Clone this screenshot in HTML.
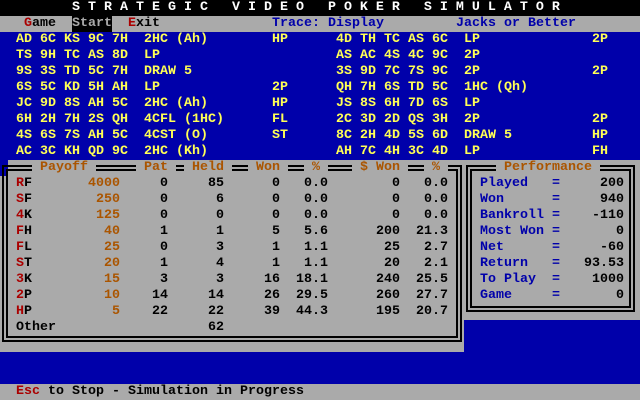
<!DOCTYPE html>
<html><head><meta charset="utf-8"><style>
*{margin:0;padding:0}
body{width:640px;height:400px;background:#0000aa;position:relative;overflow:hidden;font-family:"Liberation Mono","DejaVu Sans Mono",monospace;font-size:13.333px;line-height:16px;font-weight:bold}
div,span{position:absolute;white-space:pre}
span span{position:static}
.r{color:#aa0000}.br{color:#aa5500}.bl{color:#0000aa}.k{color:#000}.y{color:#ffff55}.w{color:#fff}
.g{background:#aaaaaa}
.row{left:0;width:640px;height:16px}
.box{border:6px double #000}
.n{text-align:right;color:#000}
</style></head><body>
<div class="row" style="top:0;background:#000"><span class="w" style="left:72px;top:0">S T R A T E G I C   V I D E O   P O K E R   S I M U L A T O R</span></div>
<div class="row g" style="top:16px"></div>
<span class="k" style="left:24px;top:16px"><span class="r">G</span>ame</span>
<span style="left:72px;top:16px;background:#000;color:#aaaaaa">Start</span>
<span class="k" style="left:128px;top:16px"><span class="r">E</span>xit</span>
<span class="bl" style="left:272px;top:16px">Trace: Display</span>
<span class="bl" style="left:456px;top:16px">Jacks or Better</span>
<div class="y" style="left:16px;top:32px">AD 6C KS 9C 7H  2HC (Ah)        HP
TS 9H TC AS 8D  LP
9S 3S TD 5C 7H  DRAW 5
6S 5C KD 5H AH  LP              2P
JC 9D 8S AH 5C  2HC (Ah)        HP
6H 2H 7H 2S QH  4CFL (1HC)      FL
4S 6S 7S AH 5C  4CST (O)        ST
AC 3C KH QD 9C  2HC (Kh)</div>
<div class="y" style="left:336px;top:32px">4D TH TC AS 6C  LP              2P
AS AC 4S 4C 9C  2P
3S 9D 7C 7S 9C  2P              2P
QH 7H 6S TD 5C  1HC (Qh)
JS 8S 6H 7D 6S  LP
2C 3D 2D QS 3H  2P              2P
8C 2H 4D 5S 6D  DRAW 5          HP
AH 7C 4H 3C 4D  LP              FH</div>
<div class="g" style="left:8px;top:160px;width:456px;height:16px"></div>
<div class="g" style="left:0;top:176px;width:464px;height:176px"></div>
<div class="g" style="left:464px;top:160px;width:176px;height:160px"></div>
<div class="box" style="left:2px;top:165px;width:448px;height:165px"></div>
<div class="box" style="left:466px;top:165px;width:157px;height:135px"></div>
<span class="br g" style="left:32px;top:160px;padding:0 8px">Payoff</span>
<span class="br g" style="left:136px;top:160px;padding:0 8px">Pat</span>
<span class="br g" style="left:184px;top:160px;padding:0 8px">Held</span>
<span class="br g" style="left:248px;top:160px;padding:0 8px">Won</span>
<span class="br g" style="left:304px;top:160px;padding:0 8px">%</span>
<span class="br g" style="left:352px;top:160px;padding:0 8px">$ Won</span>
<span class="br g" style="left:424px;top:160px;padding:0 8px">%</span>
<span class="br g" style="left:496px;top:160px;padding:0 8px">Performance</span>
<span class="k" style="left:16px;top:176px"><span class="r">R</span>F
<span class="r">S</span>F
<span class="r">4</span>K
<span class="r">F</span>H
<span class="r">F</span>L
<span class="r">S</span>T
<span class="r">3</span>K
<span class="r">2</span>P
<span class="r">H</span>P
Other</span>
<div class="n" style="right:520px;top:176px;color:#aa5500">4000
250
125
40
25
20
15
10
5</div>
<div class="n" style="right:472px;top:176px">0
0
0
1
0
1
3
14
22</div>
<div class="n" style="right:416px;top:176px">85
6
0
1
3
4
3
14
22
62</div>
<div class="n" style="right:360px;top:176px">0
0
0
5
1
1
16
26
39</div>
<div class="n" style="right:312px;top:176px">0.0
0.0
0.0
5.6
1.1
1.1
18.1
29.5
44.3</div>
<div class="n" style="right:240px;top:176px">0
0
0
200
25
20
240
260
195</div>
<div class="n" style="right:192px;top:176px">0.0
0.0
0.0
21.3
2.7
2.1
25.5
27.7
20.7</div>
<div class="bl" style="left:480px;top:176px">Played   =
Won      =
Bankroll =
Most Won =
Net      =
Return   =
To Play  =
Game     =</div>
<div class="n" style="right:16px;top:176px">200
940
-110
0
-60
93.53
1000
0</div>
<div class="row g" style="top:384px"></div>
<span class="k" style="left:16px;top:384px"><span class="r">Esc</span> to Stop - Simulation in Progress</span>
</body></html>
